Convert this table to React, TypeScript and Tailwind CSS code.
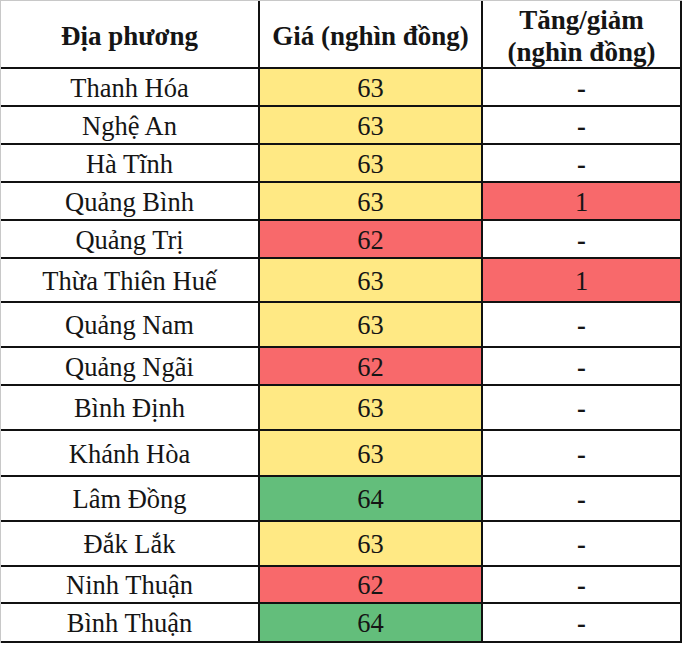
const ROWS: { name: string; price: string; priceBg: string; change: string; changeBg: string; h: string }[] = [
  { name: "Thanh Hóa", price: "63", priceBg: "bg-[#ffe984]", change: "-", changeBg: "bg-white", h: "h-[38px]" },
  { name: "Nghệ An", price: "63", priceBg: "bg-[#ffe984]", change: "-", changeBg: "bg-white", h: "h-[38px]" },
  { name: "Hà Tĩnh", price: "63", priceBg: "bg-[#ffe984]", change: "-", changeBg: "bg-white", h: "h-[38px]" },
  { name: "Quảng Bình", price: "63", priceBg: "bg-[#ffe984]", change: "1", changeBg: "bg-[#f8696b]", h: "h-[38px]" },
  { name: "Quảng Trị", price: "62", priceBg: "bg-[#f8696b]", change: "-", changeBg: "bg-white", h: "h-[38px]" },
  { name: "Thừa Thiên Huế", price: "63", priceBg: "bg-[#ffe984]", change: "1", changeBg: "bg-[#f8696b]", h: "h-[44px]" },
  { name: "Quảng Nam", price: "63", priceBg: "bg-[#ffe984]", change: "-", changeBg: "bg-white", h: "h-[45px]" },
  { name: "Quảng Ngãi", price: "62", priceBg: "bg-[#f8696b]", change: "-", changeBg: "bg-white", h: "h-[38px]" },
  { name: "Bình Định", price: "63", priceBg: "bg-[#ffe984]", change: "-", changeBg: "bg-white", h: "h-[45px]" },
  { name: "Khánh Hòa", price: "63", priceBg: "bg-[#ffe984]", change: "-", changeBg: "bg-white", h: "h-[46px]" },
  { name: "Lâm Đồng", price: "64", priceBg: "bg-[#63be7b]", change: "-", changeBg: "bg-white", h: "h-[45px]" },
  { name: "Đắk Lắk", price: "63", priceBg: "bg-[#ffe984]", change: "-", changeBg: "bg-white", h: "h-[45px]" },
  { name: "Ninh Thuận", price: "62", priceBg: "bg-[#f8696b]", change: "-", changeBg: "bg-white", h: "h-[37px]" },
  { name: "Bình Thuận", price: "64", priceBg: "bg-[#63be7b]", change: "-", changeBg: "bg-white", h: "h-[39px]" },
];

export default function App() {
  return (
    <div className="w-[691px] h-[652px] bg-white [font-family:'Liberation_Serif',serif] text-[26.5px] leading-none text-[#151515]">
      <div className="w-[682px] border-l border-t border-[#c8c8c8]">
        {/* header */}
        <div className="flex h-[68px] font-bold text-[27px]">
          <div className="w-[259px] flex items-center justify-center border-r-2 border-b-2 border-[#111] pt-1">
            Địa phương
          </div>
          <div className="w-[223px] flex items-center justify-center border-r-2 border-b-2 border-[#111] pt-1">
            Giá (nghìn đồng)
          </div>
          <div className="w-[199px] flex flex-col items-center justify-center border-r-2 border-b-2 border-[#111] leading-[32px] pt-1">
            <span>Tăng/giảm</span>
            <span>(nghìn đồng)</span>
          </div>
        </div>
        {ROWS.map((r) => (
          <div key={r.name} className={`flex ${r.h}`}>
            <div className="w-[259px] flex items-center justify-center border-r-2 border-b-2 border-[#111] pt-0.5">
              {r.name}
            </div>
            <div className={`w-[223px] flex items-center justify-center border-r-2 border-b-2 border-[#111] pt-0.5 ${r.priceBg}`}>
              {r.price}
            </div>
            <div className={`w-[199px] flex items-center justify-center border-r-2 border-b-2 border-[#111] pt-0.5 ${r.changeBg}`}>
              {r.change === "-" ? <span className="font-bold">-</span> : r.change}
            </div>
          </div>
        ))}
      </div>
    </div>
  );
}
